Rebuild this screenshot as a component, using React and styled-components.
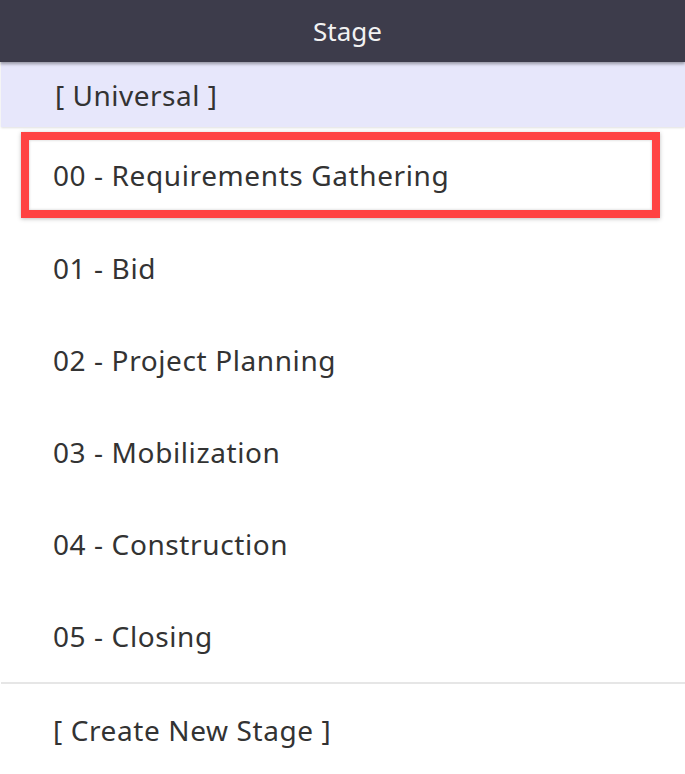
import styled, { createGlobalStyle } from "styled-components";

const GlobalStyle = createGlobalStyle`
  body {
    margin: 0;
    background: #ffffff;
    font-family: "Noto Sans", "Open Sans", sans-serif;
  }
`;

const Panel = styled.div`
  width: 685px;
  height: 774px;
  overflow: hidden;
  background: #ffffff;
  display: flex;
  flex-direction: column;
`;

const Header = styled.div`
  height: 62px;
  flex-shrink: 0;
  background: #3d3c4b;
  color: #f2f2f2;
  font-size: 26px;
  display: flex;
  align-items: center;
  justify-content: center;
  padding-left: 10px;
  box-shadow: 0 2px 3px rgba(0, 0, 0, 0.35);
  position: relative;
  z-index: 1;
`;

const Universal = styled.div`
  height: 65px;
  flex-shrink: 0;
  margin-left: 1px;
  background: #e7e7fb;
  color: #333333;
  font-size: 28px;
  letter-spacing: 0.5px;
  display: flex;
  align-items: center;
  padding-left: 54px;
  box-shadow: 0 1px 2px rgba(0, 0, 0, 0.12);
`;

const Row = styled.div`
  height: ${(p) => (p.selected ? "70px" : "92px")};
  flex-shrink: 0;
  display: flex;
  align-items: center;
  padding-left: ${(p) => (p.selected ? "24px" : "53px")};
  color: #333333;
  font-size: 28px;
  letter-spacing: 0.6px;
  border: ${(p) => (p.selected ? "8px solid #ff4343" : "none")};
  margin: ${(p) => (p.selected ? "5px 25px 4px 21px" : "0")};
  box-shadow: ${(p) => (p.selected ? "0 1px 4px rgba(0,0,0,0.25), inset 0 0 3px rgba(0,0,0,0.2)" : "none")};
`;

const Divider = styled.div`
  height: 2px;
  flex-shrink: 0;
  margin-left: 1px;
  background: #e6e6e6;
`;

const stages = [
  "01 - Bid",
  "02 - Project Planning",
  "03 - Mobilization",
  "04 - Construction",
  "05 - Closing",
];

export default function App() {
  return (
    <>
      <GlobalStyle />
      <Panel>
        <Header>Stage</Header>
        <Universal>[ Universal ]</Universal>
        <Row selected>00 - Requirements Gathering</Row>
        {stages.map((s) => (
          <Row key={s}>{s}</Row>
        ))}
        <Divider />
        <Row>[ Create New Stage ]</Row>
      </Panel>
    </>
  );
}
